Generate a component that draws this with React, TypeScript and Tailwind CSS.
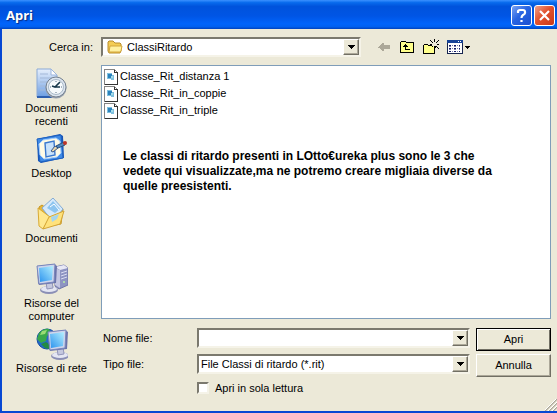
import type { ReactNode } from "react";

const files = ["Classe_Rit_distanza 1", "Classe_Rit_in_coppie", "Classe_Rit_in_triple"];

const sunken = "border-2 border-t-[#7b796e] border-l-[#7b796e] border-r-[#f5f3e8] border-b-[#f5f3e8] bg-white";
const raised =
	"border border-t-white border-l-white border-r-[#716f64] border-b-[#716f64] bg-[#ece9d8] shadow-[inset_-1px_-1px_0_#aca899]";

function RecentIcon() {
	return (
		<svg width="32" height="32" viewBox="0 0 32 32">
			<defs>
				<linearGradient id="page" x1="0" y1="0" x2="0" y2="1">
					<stop offset="0" stopColor="#e6effc" />
					<stop offset="1" stopColor="#6d9ee2" />
				</linearGradient>
			</defs>
			<path d="M1 1h14l6 6v22H1z" fill="url(#page)" stroke="#8ba9d6" />
			<path d="M15 1v6h6z" fill="#fff" stroke="#9cb5dc" />
			<path d="M4 6h8M4 10h13M4 14h8M4 18h5M4 22h5" stroke="#a3b8d8" />
			<path d="M1 29h20" stroke="#2d5faf" strokeWidth="2" />
			<circle cx="20" cy="20" r="10.5" fill="#98a2b0" />
			<circle cx="20" cy="19" r="10" fill="#dce5ef" stroke="#75818f" />
			<circle cx="20" cy="19" r="7.5" fill="#f6fafc" stroke="#a9b9c8" />
			<path d="M20 13v1M20 24v1M14 19h1M25 19h1" stroke="#587088" />
			<path d="M24 14l-5 5-3-1M19 19h5" stroke="#17384a" strokeWidth="1.600" fill="none" />
		</svg>
	);
}

function DesktopIcon() {
	return (
		<svg width="32" height="32" viewBox="0 0 32 32">
			<path d="M1 6L24 1l3 2 1 22-23 5-3-2z" fill="#1855b8" />
			<path d="M1 6L25 2l2 23-23 4z" fill="#3f8ae5" stroke="#1e62c2" />
			<path d="M3 11l4-4 13-2 4 3 1 12-4 4-13 2-4-4z" fill="#fffbe5" stroke="#a6cfff" />
			<path d="M9 10l9-2 1 14-9 2z" fill="#c9e3fb" stroke="#3978ce" strokeWidth="1.400" />
			<path d="M15 18l4-5 3 2-5 4z" fill="#e8d7ab" stroke="#39598c" />
			<path d="M20 13l8-4 1 3-7 3z" fill="#5289bd" stroke="#29507d" />
			<circle cx="29" cy="10" r="2" fill="#bd3527" />
		</svg>
	);
}

function DocumentsIcon() {
	return (
		<svg width="32" height="32" viewBox="0 0 32 32">
			<path d="M3 9l3-2 4 3 17 1-2 15-18 3z" fill="#e6b63c" stroke="#c79622" />
			<path d="M17 0l10 11-10 13L6 10z" fill="#d5e9fb" stroke="#83abd4" />
			<path d="M17 3l7 8-5 4-8-5z" fill="#8cc4ef" />
			<path d="M14 9l4-3 5 6" stroke="#fff" fill="none" />
			<path d="M2 10l12 9-7 12-4-3z" fill="#ffe88f" stroke="#d8aa35" />
			<path d="M7 31l6-12 15-6-4 13z" fill="#ffe27b" stroke="#d4a536" />
			<path d="M15 19l8-3-2 5-5 3z" fill="#a5d5ed" />
		</svg>
	);
}

function Monitor({ id }: { id: string }) {
	return (
		<>
			<defs>
				<linearGradient id={id} x1="0" y1="1" x2="1" y2="0">
					<stop offset="0" stopColor="#2c93ee" />
					<stop offset="1" stopColor="#b3f0ff" />
				</linearGradient>
			</defs>
			<ellipse cx="13" cy="27" rx="9" ry="4" fill="#8b8fb6" />
			<ellipse cx="13" cy="26" rx="8" ry="3" fill="#e4e6f3" />
			<path d="M10 19l6-1 1 7-6 1z" fill="#c5c8df" stroke="#9296b9" />
			<path d="M1 3l17-2 3 2-1 17-17 2-1-2z" fill="#6b73aa" />
			<path d="M1 3l18-2-1 18-15 2z" fill="#ced5ec" stroke="#7886bc" />
			<path d="M3 5l14-2-1 14-12 2z" fill={`url(#${id})`} />
		</>
	);
}

function ComputerIcon() {
	return (
		<svg width="32" height="32" viewBox="0 0 32 32">
			<path d="M19 4l9-2 4 3v17l-9 4-4-3z" fill="#8e94c2" stroke="#6f75a9" />
			<path d="M19 4l9-2 4 3-8 2z" fill="#e8e8f5" />
			<path d="M19 5l5 2v18l-5-3z" fill="#c5c7e2" />
			<path d="M25 10l6-2M25 13l6-2M25 16l6-2" stroke="#dadcf1" />
			<circle cx="28" cy="19" r="1" fill="#b8f0a6" />
			<Monitor id="screen-computer" />
		</svg>
	);
}

function NetworkIcon() {
	return (
		<svg width="32" height="32" viewBox="0 0 32 32">
			<circle cx="11" cy="11" r="10" fill="#2369c8" stroke="#1750a5" />
			<path d="M3 5q5-5 10-4l2 4-4 3-1 5-5 2-4-4z" fill="#39a84b" />
			<path d="M6 3l5-1-2 4-5 1z" fill="#9bdc75" />
			<path d="M5 16l5-2 4 3-1 4-4-1z" fill="#238b42" />
			<g transform="translate(11 1)">
				<Monitor id="screen-network" />
			</g>
		</svg>
	);
}

function FolderIcon() {
	return (
		<svg width="16" height="14" viewBox="0 0 16 14">
			<path d="M1 11V2l1-1h4l2 2h5l1 1v7l-1 2H2z" fill="#f4cc54" stroke="#b88d2e" />
			<path d="M2 12l1-6h12l-1 5-1 1z" fill="#fff0a0" stroke="#d3a63b" />
		</svg>
	);
}

function FileIcon() {
	return (
		<svg width="14" height="16" viewBox="0 0 14 16" shapeRendering="crispEdges">
			<path d="M.5.5h10l3 3v12H.5z" fill="#fff" stroke="#848484" />
			<path d="M10.5.5v3h3v12H.5" fill="none" stroke="#333" />
			<path d="M3 4h5v2h2v5H7v-1H3z" fill="#7fc0de" />
			<path d="M4 5h4v4H4z" fill="#2b82bd" />
			<path d="M7 7h2v2H7z" fill="#a4dcea" />
		</svg>
	);
}

function Arrow() {
	return (
		<svg width="7" height="4" viewBox="0 0 7 4" shapeRendering="crispEdges">
			<path d="M0 0h7v1H6v1H5v1H4v1H3V3H2V2H1V1H0z" fill="#000" />
		</svg>
	);
}

function DropDown({ id, value, icon }: { id: string; value: string; icon?: ReactNode }) {
	return (
		<div className={`relative flex h-5 min-w-0 flex-1 ${sunken}`}>
			{icon && <span className="pointer-events-none absolute top-px left-1">{icon}</span>}
			<select id={id} className={`min-w-0 flex-1 appearance-none outline-none ${icon ? "pl-6" : "pl-0.5"}`}>
				<option>{value}</option>
			</select>
			<span className={`pointer-events-none absolute inset-y-0 right-0 flex w-4 items-center justify-center ${raised}`}>
				<Arrow />
			</span>
		</div>
	);
}

function Place({ icon, children }: { icon: ReactNode; children: ReactNode }) {
	return (
		<button className="flex h-[65px] w-full flex-col items-center gap-0.5 leading-[13px]">
			{icon}
			<span>{children}</span>
		</button>
	);
}

function Toolbar() {
	return (
		<div className="flex items-center gap-2">
			<button aria-label="Indietro">
				<svg width="14" height="16" viewBox="0 0 14 16" shapeRendering="crispEdges">
					<path d="M1 8h1V7h1V6h1V5h1V4h2v2h6v4H7v2H5v-1H4v-1H3V9H1z" fill="#aca899" />
				</svg>
			</button>
			<button aria-label="Livello superiore">
				<svg width="16" height="16" viewBox="0 0 16 16" shapeRendering="crispEdges">
					<path d="M1.500 13.500v-10l1-1h4l1 1h7v10z" fill="#ffff8c" stroke="#000" />
					<path d="M5 6h1V5h1v1h1v1h1v1H7v2h4v1H6V8H4V7h1z" fill="#000" />
				</svg>
			</button>
			<button aria-label="Crea nuova cartella">
				<svg width="16" height="16" viewBox="0 0 16 16" shapeRendering="crispEdges">
					<path d="M.5 14.500v-8l1-1h3l1 1h6v8z" fill="#ffff8c" stroke="#000" />
					<path d="M9 3h5v4H9z" fill="#ece9d8" />
					<path
						d="M11 0h1v3h-1zM7 1h1v1H7zM8 2h1v1H8zM9 3h1v1H9zM13 3h1v1h-1zM14 2h1v1h-1zM15 1h1v1h-1zM7 5h2v1H7zM14 5h2v1h-2zM12 7h1v2h-1zM13 7h1v1h-1zM14 8h1v1h-1zM15 9h1v1h-1zM9 7h1v1H9z"
						fill="#000"
					/>
				</svg>
			</button>
			<button aria-label="Menu Visualizza">
				<svg width="23" height="16" viewBox="0 0 23 16" shapeRendering="crispEdges">
					<path d="M.5 1.500h15v13H.5z" fill="#fff" stroke="#17264f" />
					<path d="M0 1h16v3H0z" fill="#174397" />
					<path d="M11 2h1v1h-1zM13 2h1v1h-1z" fill="#fff" />
					<path d="M2 6h2v1H2zM7 6h2v1H7zM12 6h1v1h-1zM2 9h2v1H2zM7 9h2v1H7zM12 9h1v1h-1zM2 12h2v1H2zM7 12h2v1H7zM12 12h1v1h-1z" fill="#111b66" />
					<path d="M5 6h1v1H5zM10 6h1v1h-1zM5 9h1v1H5zM10 9h1v1h-1zM5 12h1v1H5zM10 12h1v1h-1zM2 7h2v1H2zM7 7h2v1H7zM12 7h1v1h-1zM2 10h2v1H2zM7 10h2v1H7zM12 10h1v1h-1z" fill="#777ba8" />
					<path d="M18 7h5v1h-1v1h-1v1h-1V9h-1V8h-1z" fill="#000" />
				</svg>
			</button>
		</div>
	);
}

export default function App() {
	return (
		<div className="border-b-2 border-l-2 border-[#0848d3] bg-[#ece9d8] font-['Liberation_Sans',Arial,sans-serif] text-[11px] text-black">
			<header className="-ml-0.5 flex h-[29px] items-center justify-between bg-[linear-gradient(#3b91ff_0%,#086bed_9%,#0053dc_22%,#0055e5_55%,#0064fb_82%,#0060f0_92%,#0042bd_100%)] pt-px pr-0.5 pl-1.5">
				<h1 className="pt-0.5 font-['Noto_Sans',sans-serif] text-[13px] font-bold text-white [text-shadow:1px_1px_1px_#0a2c80]">
					Apri
				</h1>
				<div className="flex gap-0.5">
					<button
						aria-label="Guida"
						className="flex size-[21px] items-center justify-center rounded-[3px] border border-white bg-[linear-gradient(135deg,#7ba4f4,#2864e2_45%,#1b4fd0)]"
					>
						<svg width="13" height="15" viewBox="0 0 13 15" fill="none" stroke="#fff" strokeWidth="2.200">
							<path d="M3 5V3.500Q3 2 5 2h3q2 0 2 2v1q0 1-2 2-1.500 1-1.500 3M6.500 12v2" />
						</svg>
					</button>
					<button
						aria-label="Chiudi"
						className="flex size-[21px] items-center justify-center rounded-[3px] border border-white bg-[linear-gradient(135deg,#f0a08a,#e2512d_45%,#c8391a)]"
					>
						<svg width="13" height="13" viewBox="0 0 13 13" stroke="#fff" strokeWidth="2.200">
							<path d="M2 2l9 9M11 2l-9 9" />
						</svg>
					</button>
				</div>
			</header>

			<div className="flex items-center pt-2">
				<label htmlFor="folder" className="w-[99px] shrink-0 pr-2 text-right">
					Cerca in:
				</label>
				<div className="flex flex-1 items-center gap-4 pr-[87px]">
					<DropDown id="folder" value="ClassiRitardo" icon={<FolderIcon />} />
					<Toolbar />
				</div>
			</div>

			<div className="flex pt-2">
				<nav className="w-[99px] shrink-0 pt-[3px]">
					<Place icon={<RecentIcon />}>
						Documenti
						<br />
						recenti
					</Place>
					<Place icon={<DesktopIcon />}>Desktop</Place>
					<Place icon={<DocumentsIcon />}>Documenti</Place>
					<Place icon={<ComputerIcon />}>
						Risorse del
						<br />
						computer
					</Place>
					<Place icon={<NetworkIcon />}>Risorse di rete</Place>
				</nav>

				<main className="min-w-0 flex-1 pr-1.5">
					<div className="h-[254px] border border-[#7f9db9] bg-white pt-0.5 pl-0.5">
						<ul>
							{files.map((file) => (
								<li key={file} className="flex h-[17px] items-center gap-0.5">
									<FileIcon />
									{file}
								</li>
							))}
						</ul>
						<p className="pt-[30px] pl-[19px] text-[12px] leading-[15px] font-bold">
							Le classi di ritardo presenti in LOtto€ureka plus sono le 3 che
							<br />
							vedete qui visualizzate,ma ne potremo creare migliaia diverse da
							<br />
							quelle preesistenti.
						</p>
					</div>

					<form className="flex gap-1.5 pt-[9px]" onSubmit={(e) => e.preventDefault()}>
						<div className="flex min-w-0 flex-1 flex-col gap-1.5">
							<div className="flex h-5 items-center">
								<label htmlFor="name" className="w-24 shrink-0 pl-0.5">
									Nome file:
								</label>
								<div className={`flex h-5 min-w-0 flex-1 ${sunken}`}>
									<input id="name" type="text" className="min-w-0 flex-1 px-0.5 outline-none" />
									<button type="button" aria-label="Nomi recenti" className={`flex w-4 items-center justify-center ${raised}`}>
										<Arrow />
									</button>
								</div>
							</div>
							<div className="flex h-5 items-center">
								<label htmlFor="type" className="w-24 shrink-0 pl-0.5">
									Tipo file:
								</label>
								<DropDown id="type" value="File Classi di ritardo (*.rit)" />
							</div>
							<label className="flex h-4 items-center gap-1.5 pl-24">
								<input type="checkbox" className={`size-3 appearance-none checked:bg-black ${sunken}`} />
								Apri in sola lettura
							</label>
						</div>
						<div className="flex w-[75px] shrink-0 flex-col gap-[3px]">
							<button type="submit" className="h-[23px] border border-black bg-[#ece9d8] shadow-[inset_1px_1px_0_#fff,inset_-1px_-1px_0_#716f64]">
								Apri
							</button>
							<button type="button" className={`h-[23px] ${raised}`}>
								Annulla
							</button>
						</div>
					</form>
				</main>
			</div>

			<footer className="flex h-[15px] items-end justify-end">
				<svg width="12" height="12" viewBox="0 0 12 12">
					<path d="M0 12L12 0M4 12l8-8M8 12l4-4" stroke="#aca899" strokeWidth="1.500" />
					<path d="M-1 12L11 0M3 12l9-9M7 12l5-5" stroke="#fff" />
				</svg>
			</footer>
		</div>
	);
}
